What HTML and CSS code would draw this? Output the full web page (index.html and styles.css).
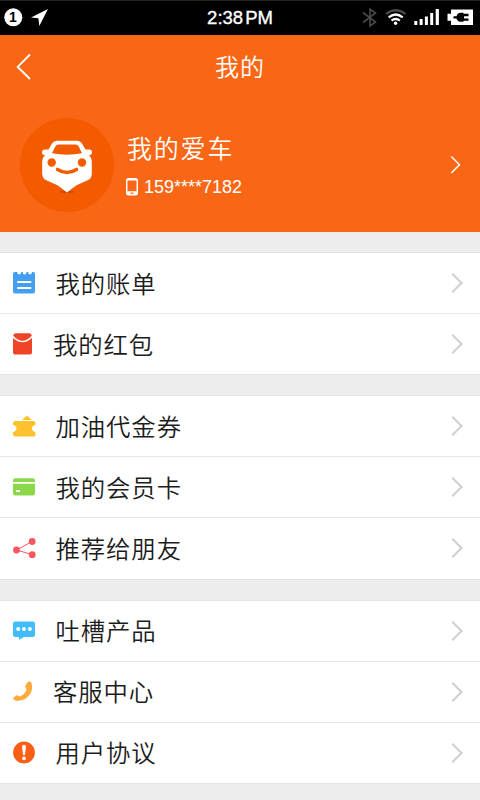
FILE: index.html
```html
<!DOCTYPE html>
<html lang="zh-CN">
<head>
<meta charset="utf-8">
<title>我的</title>
<link rel="stylesheet" href="styles.css">
</head>
<body>
<div class="status">
  <div class="side"><svg width="60" height="35" viewBox="0 0 60 35"><circle cx="13.3" cy="17.3" r="9" fill="#fff"/><path d="M31 17.500 48 9 39.300 26 38.400 18.300Z" fill="#fff"/></svg></div>
  <span class="badge">1</span>
  <span class="clock">2:38<span class="pm">PM</span></span>
  <div class="side end"><svg width="130" height="35" viewBox="350 0 130 35">
    <path d="M363 12.500 375.500 22 370 26V9L375.500 13 363 22.500" fill="none" stroke="#4a4a4a" stroke-width="1.600"/>
    <g fill="none" stroke="#fff" stroke-width="2.200"><path d="M386 14Q395.700 6.500 405.500 14" stroke="#4a4a4a"/><path d="M388.700 17.300Q395.700 11.700 402.700 17.300"/><path d="M391.500 20.600Q395.700 17.400 399.900 20.600"/></g>
    <circle cx="395.600" cy="23.300" r="1.700" fill="#fff"/>
    <path d="M414.300 21h3v4h-3zM419.600 19h3v6h-3zM424.900 16.500h3V25h-3zM430.200 13h3v12h-3zM435.700 9h3.200v16h-3.200z" fill="#fff"/>
    <path d="M451 9.500h22V25h-22v-4.200h-3.500v-7H451z" fill="#fff"/>
    <path d="M453.500 16.200h3q1-3.400 4.500-3.400h2.500v1h5v2.400H464v2.200h4.500v2.400h-5v1H461q-3.500 0-4.500-3.400h-3z" fill="#000"/>
  </svg></div>
</div>
<header class="head">
  <div class="nav">
    <svg class="back" width="16" height="28" viewBox="0 0 16 28"><path d="M14 1.500 1.700 13.900 14 26" fill="none" stroke="#fff" stroke-width="1.900"/></svg>
    <h1>我的</h1>
  </div>
  <div class="profile">
    <div class="avatar">
      <svg width="94" height="94" viewBox="0 0 94 94">
        <ellipse cx="47" cy="73.800" rx="7.500" ry="1.300" fill="#c94b00"/>
        <path d="M28.500 31.500 32 25.500Q33.500 22.800 37 22.800h20q3.500 0 5 2.700l3.500 6H69q3 0 3 2.700 0 2.800-2.500 2.800h-.7q3 2.500 3 7v12q0 3.500-2.500 5.500L56 67.500 47 74.500 38 67.500 24.700 61.500q-2.500-2-2.500-5.500V44q0-4.500 3-7h-.7Q22 37 22 34.200q0-2.700 3-2.700z" fill="#fff"/>
        <path d="M35.300 28.500Q36.200 26.500 38.500 26.500h17q2.300 0 3.200 2l3.300 6.800Q47 38 32 35.300z" fill="#f45b00"/>
        <circle cx="31.700" cy="44.500" r="4.200" fill="#f45b00"/><circle cx="62" cy="44.500" r="4.200" fill="#f45b00"/>
        <path d="M37.500 51.500Q47 57.500 56.500 51.500" fill="none" stroke="#f45b00" stroke-width="3.600" stroke-linecap="round"/>
      </svg>
    </div>
    <div class="info">
      <div class="name">我的爱车</div>
      <div class="phone"><svg width="12" height="18" viewBox="0 0 12 18"><path d="M2.500 0h7Q12 0 12 2.500v12.500q0 2.500-2.500 2.500h-7Q0 17.500 0 15V2.500Q0 0 2.500 0zM1.500 2.500v10.700h9V2.500zM4.500 14.500v1.200h3v-1.200z" fill="#fff" fill-rule="evenodd"/></svg><span>159****7182</span></div>
    </div>
    <svg class="go" width="11" height="20" viewBox="0 0 11 20"><path d="M1.300 1.500 9.500 9.700 1.300 18" fill="none" stroke="#fff" stroke-width="1.500"/></svg>
  </div>
</header>
<main>
  <section class="group two">
    <div class="row"><svg class="ico" width="24" height="24" viewBox="0 0 24 24"><path d="M3 1h2.200q.4 2.500 2 2.500t2-2.500h1.400q.4 2.500 2 2.500t2-2.500h1.400q.4 2.500 2 2.500t2-2.500H21q2 0 2 2v17.500q0 2-2 2H3q-2 0-2-2V3q0-2 2-2z" fill="#459ff0"/><path d="M6 11h12.500M6 17h12.500" stroke="#fff" stroke-width="2" stroke-linecap="round"/></svg><span class="label">我的账单</span><i class="arrow"></i></div>
    <div class="row near"><svg class="ico" width="24" height="24" viewBox="0 0 24 24"><path d="M1 6Q10.500 14.500 20 6v14.500q0 2-2 2H3q-2 0-2-2z" fill="#ef4427"/><path d="M1.200 3.700Q1.500 1.200 3.500 1.200h14q2 0 2.300 2.500-9.300 10-18.600 0z" fill="#ef4427"/></svg><span class="label">我的红包</span><i class="arrow"></i></div>
  </section>
  <section class="group">
    <div class="row"><svg class="ico" width="24" height="24" viewBox="0 0 24 24"><path d="M10 6 15 1.500l4.700 4.500zM3 7h18.500q2 0 2 2v1.800q-3.500 1.200-3.500 3.700t3.500 3.700V20.500q0 2-2 2H3q-2 0-2-2v-2.300q3.500-1.200 3.500-3.700T1 10.800V9q0-2 2-2z" fill="#fdc12d"/></svg><span class="label">加油代金券</span><i class="arrow"></i></div>
    <div class="row"><svg class="ico" width="24" height="24" viewBox="0 0 24 24"><path d="M1 7V5.500q0-2.200 2.200-2.200h17.600q2.200 0 2.200 2.200V7zM1 8.800h22v9.500q0 2.200-2.200 2.200H3.200Q1 20.500 1 18.300zM4 15v2h4v-2z" fill="#8bd94a" fill-rule="evenodd"/></svg><span class="label">我的会员卡</span><i class="arrow"></i></div>
    <div class="row"><svg class="ico" width="24" height="24" viewBox="0 0 24 24"><path d="M20.300 5.500 4.500 14 20.300 18.700" fill="none" stroke="#fb5660" stroke-width="1"/><g fill="#fb5660"><circle cx="20.200" cy="5.500" r="3.400"/><circle cx="4.500" cy="14" r="3.400"/><circle cx="20.200" cy="18.700" r="3.400"/></g></svg><span class="label">推荐给朋友</span><i class="arrow"></i></div>
  </section>
  <section class="group">
    <div class="row"><svg class="ico" width="24" height="24" viewBox="0 0 24 24"><path d="M3.200 2.500h17.600Q23 2.500 23 4.700v11q0 2.200-2.200 2.200H12l-5 2.800v-2.800H3.200Q1 17.900 1 15.700v-11Q1 2.500 3.200 2.500z" fill="#41bdfb"/><g fill="#fff"><circle cx="6.200" cy="10" r="2"/><circle cx="12" cy="10" r="2"/><circle cx="17.900" cy="10" r="2"/></g></svg><span class="label">吐槽产品</span><i class="arrow"></i></div>
    <div class="row near"><svg class="ico" width="24" height="24" viewBox="0 0 24 24"><path d="M15.500 2.200Q17.500.9 19.300 2.300 21.500 9 17.800 14.600 13.500 20.700 5.500 20.900 3 20.900 1.500 19.300.8 18 2 16.900l2.200-1.500q1-.6 1.900.2l1.600 1Q12 15 14.500 10L13.500 7.500q-.4-1 0-2z" fill="#fdab3f"/></svg><span class="label">客服中心</span><i class="arrow"></i></div>
    <div class="row"><svg class="ico" width="24" height="24" viewBox="0 0 24 24"><circle cx="12" cy="11.500" r="10.900" fill="#fb5e14"/><path d="M12 3.800q2.200 0 2 2.300l-1 7.100q-.2 1-1 1t-1-1l-1-7.100q-.2-2.300 2-2.300z" fill="#fff"/><circle cx="12" cy="17.300" r="1.900" fill="#fff"/></svg><span class="label">用户协议</span><i class="arrow"></i></div>
  </section>
</main>
</body>
</html>
```
FILE: styles.css
```css
* { box-sizing: border-box; }
body {
  margin: 0;
  width: 480px;
  height: 800px;
  overflow: hidden;
  background: #ededed;
  color: #1c1c1c;
  font-family: "Liberation Sans", "Noto Sans CJK SC", sans-serif;
}
svg { display: block; flex: none; }
.status {
  position: relative;
  display: grid;
  grid-template-columns: 1fr auto 1fr;
  height: 35px;
  background: #000;
  border-top: 1px solid #222;
}
.status svg { margin-top: -1px; }
.end {
  display: flex;
  justify-content: flex-end;
}
.badge {
  position: absolute;
  left: 4px;
  top: 7px;
  width: 18px;
  font-size: 14px;
  line-height: 19px;
  font-weight: bold;
  text-align: center;
  color: #000;
}
.clock {
  color: #fff;
  font-size: 18.5px;
  line-height: 34px;
  white-space: nowrap;
  -webkit-text-stroke: .35px #fff;
}
.pm { margin-left: 2px; }
.head {
  height: 197px;
  background: #f96716;
  color: #fff;
}
.nav {
  display: flex;
  align-items: center;
  height: 64px;
  padding: 0 16px;
}
.nav h1 {
  flex: 1;
  margin: 0 16px 0 0;
  padding-top: 2px;
  text-align: center;
  font-size: 24px;
  line-height: 36px;
  font-weight: 350;
  letter-spacing: 1px;
}
.profile {
  display: flex;
  align-items: center;
  height: 132px;
  padding: 0 19px 0 20px;
}
.avatar {
  width: 94px;
  height: 94px;
  border-radius: 50%;
  background: #f45b00;
}
.info {
  flex: 1;
  margin-left: 13px;
  padding-top: 6px;
}
.name {
  font-size: 25px;
  line-height: 38px;
  font-weight: 350;
  letter-spacing: 1.8px;
}
.phone {
  display: flex;
  align-items: center;
  height: 38px;
  font-size: 18px;
}
.phone span { margin: 1px 0 0 6px; }
.phone svg { margin-left: -1px; }
main {
  display: flex;
  flex-direction: column;
  gap: 20px;
  padding-top: 20px;
}
.group {
  display: flex;
  flex-direction: column;
  height: 184.5px;
  background: #fff;
  border-top: 1px solid #e4e4e4;
  border-bottom: 1px solid #e4e4e4;
}
.group.two { height: 123px; }
.row {
  flex: 1;
  display: flex;
  align-items: center;
  padding: 0 17px 0 12px;
}
.row + .row { border-top: 1px solid #e8e8e8; }
.label {
  flex: 1;
  margin-left: 19.5px;
  padding-top: 3px;
  font-size: 24.4px;
  line-height: 36px;
  font-weight: 350;
  letter-spacing: 0.9px;
}
.near .label { margin-left: 17px; }
.arrow {
  width: 14px;
  height: 14px;
  margin-right: 3px;
  border-top: 2px solid #d0d0d0;
  border-right: 2px solid #d0d0d0;
  transform: rotate(45deg);
}
```
